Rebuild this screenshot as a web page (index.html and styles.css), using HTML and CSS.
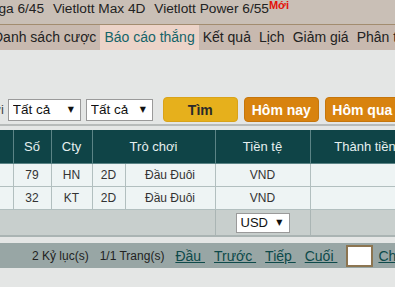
FILE: index.html
```html
<!DOCTYPE html>
<html lang="vi">
<head>
    <meta charset="UTF-8">
    <meta name="viewport" content="width=device-width, initial-scale=1.0">
    <title>Báo cáo thắng</title>
    <link rel="stylesheet" href="styles.css">
</head>
<body>
<div class="topbar">
    <span class="game">Vietlott Mega 6/45</span>
    <span class="game">Vietlott Max 4D</span>
    <span class="game">Vietlott Power 6/55<sup class="new">Mới</sup></span>
</div>

<div class="nav">
    <a class="nav-item">Danh sách cược</a>
    <a class="nav-item active">Báo cáo thắng</a>
    <a class="nav-item">Kết quả</a>
    <a class="nav-item">Lịch</a>
    <a class="nav-item">Giảm giá</a>
    <a class="nav-item">Phân tích</a>
</div>

<div class="filter">
    <div class="filter-row">
        <span class="filter-label">Trò chơi</span>
        <label class="select sel-1">
            <select><option>Tất cả</option></select>
            <span class="caret">▼</span>
        </label>
        <label class="select sel-2">
            <select><option>Tất cả</option></select>
            <span class="caret">▼</span>
        </label>
        <button class="btn btn-search">Tìm</button>
        <button class="btn btn-day">Hôm nay</button>
        <button class="btn btn-day">Hôm qua</button>
    </div>
</div>

<table class="report">
    <colgroup>
        <col style="width:13px">
        <col style="width:38px">
        <col style="width:41px">
        <col style="width:33px">
        <col style="width:90px">
        <col style="width:95px">
        <col style="width:110px">
    </colgroup>
    <thead>
        <tr>
            <th></th>
            <th>Số</th>
            <th>Cty</th>
            <th colspan="2">Trò chơi</th>
            <th>Tiền tệ</th>
            <th>Thành tiền</th>
        </tr>
    </thead>
    <tbody>
        <tr>
            <td></td>
            <td>79</td>
            <td>HN</td>
            <td>2D</td>
            <td>Đầu Đuôi</td>
            <td>VND</td>
            <td></td>
        </tr>
        <tr>
            <td></td>
            <td>32</td>
            <td>KT</td>
            <td>2D</td>
            <td>Đầu Đuôi</td>
            <td>VND</td>
            <td></td>
        </tr>
    </tbody>
    <tfoot>
        <tr>
            <td colspan="5" class="foot-blank"></td>
            <td>
                <label class="select sel-cur">
                    <select><option>USD</option></select>
                    <span class="caret">▼</span>
                </label>
            </td>
            <td></td>
        </tr>
    </tfoot>
</table>

<div class="pager">
    <span class="pager-info">2 Kỷ lục(s)</span>
    <span class="pager-info">1/1 Trang(s)</span>
    <a class="pager-link">Đầu&nbsp;</a>
    <a class="pager-link">Trước&nbsp;</a>
    <a class="pager-link">Tiếp&nbsp;</a>
    <a class="pager-link">Cuối&nbsp;</a>
    <input class="pager-input" type="text">
    <a class="pager-link">Chuyển</a>
</div>
</body>
</html>
```

FILE: styles.css
```css
body {
    margin: 0;
    width: 395px;
    height: 287px;
    overflow: hidden;
    background-color: #e4e6e5;
    font-family: "Liberation Sans", Arial, sans-serif;
    color: #222;
}
.topbar {
    height: 24px;
    line-height: 18px;
    font-size: 13.7px;
    white-space: nowrap;
    background-color: #c9bfb6;
    border-bottom: 1px solid #a28c6f;
    margin-left: -66px;
}
.game {
    margin-right: 5px;
}
.new {
    font-size: 11px;
    font-weight: bold;
    color: #e3120b;
    line-height: 0;
    vertical-align: 4px;
}
.nav {
    display: flex;
    height: 25px;
    line-height: 25px;
    font-size: 14px;
    white-space: nowrap;
    background-color: #c8b9af;
    margin-left: -11px;
}
.nav-item {
    padding: 0 4px;
    color: #222;
}
.nav-item.active {
    background-color: #ecd3c8;
    color: #146468;
}
.filter {
    padding: 47px 0 2px;
    border-bottom: 2px solid #b7bbba;
}
.filter-row {
    display: flex;
    align-items: center;
    height: 25px;
    margin-left: -44px;
    white-space: nowrap;
}
.filter-row > * {
    flex-shrink: 0;
}
.filter-label {
    font-size: 13px;
    color: #444;
    margin-right: 4px;
}
.select {
    display: flex;
    align-items: center;
    height: 20px;
    background: white;
    border: 1px solid #9a9a9a;
    padding: 0 6px 0 4px;
}
.select select {
    appearance: none;
    border: none;
    background: transparent;
    font-family: inherit;
    font-size: 13.5px;
    color: #111;
    padding: 0;
    flex: 1;
    outline: none;
}
.caret {
    font-family: "DejaVu Sans", sans-serif;
    font-size: 8px;
    color: #111;
}
.sel-1 {
    width: 61px;
    margin-right: 5px;
}
.sel-2 {
    width: 55px;
    margin-right: 10px;
}
.btn {
    width: 75px;
    height: 25px;
    margin-right: 6px;
    border-radius: 4px;
    font-family: inherit;
    font-size: 14px;
    font-weight: bold;
    padding: 0;
    cursor: pointer;
}
.btn-search {
    background-color: #e6b01c;
    border: 1px solid #d9a31a;
    color: #2a2a2a;
}
.btn-day {
    background-color: #d8830f;
    border: 1px solid #c5760c;
    color: white;
}
.report {
    margin-top: 4px;
    border-collapse: collapse;
    table-layout: fixed;
    width: 420px;
}
.report th {
    height: 33px;
    padding: 0;
    font-size: 13px;
    font-weight: normal;
    color: #e6f0f0;
    background-color: #0f4447;
    border: 1px solid #5b8486;
    border-top: none;
}
.report th:first-child,
.report td:first-child {
    border-left: none;
}
.report tbody td {
    height: 22px;
    padding: 0;
    font-size: 12px;
    color: #333;
    text-align: center;
    background-color: #eef4f4;
    border: 1px solid #b2bfbf;
}
.report tfoot td {
    height: 25px;
    padding: 0;
    background-color: #c8cfcd;
    border: 1px solid #aab5b4;
    border-bottom: 2px solid #aab4b3;
}
.report tfoot .foot-blank {
    border-right: 1px solid #aab5b4;
}
.sel-cur {
    width: 42px;
    height: 18px;
    margin: 0 auto;
}
.sel-cur select {
    font-size: 13px;
}
.pager {
    display: flex;
    align-items: center;
    height: 25px;
    margin-top: 6px;
    padding-left: 32px;
    white-space: nowrap;
    background-color: #98a6a5;
    font-size: 12px;
}
.pager > * {
    flex-shrink: 0;
}
.pager-info {
    margin-right: 11px;
}
.pager-link {
    font-size: 14px;
    color: #0d4a4a;
    text-decoration: underline;
    margin-right: 9px;
}
.pager-input {
    width: 23px;
    height: 18px;
    padding: 0;
    margin-right: 5px;
    border: 2px solid #8c7551;
    background: white;
}
```
